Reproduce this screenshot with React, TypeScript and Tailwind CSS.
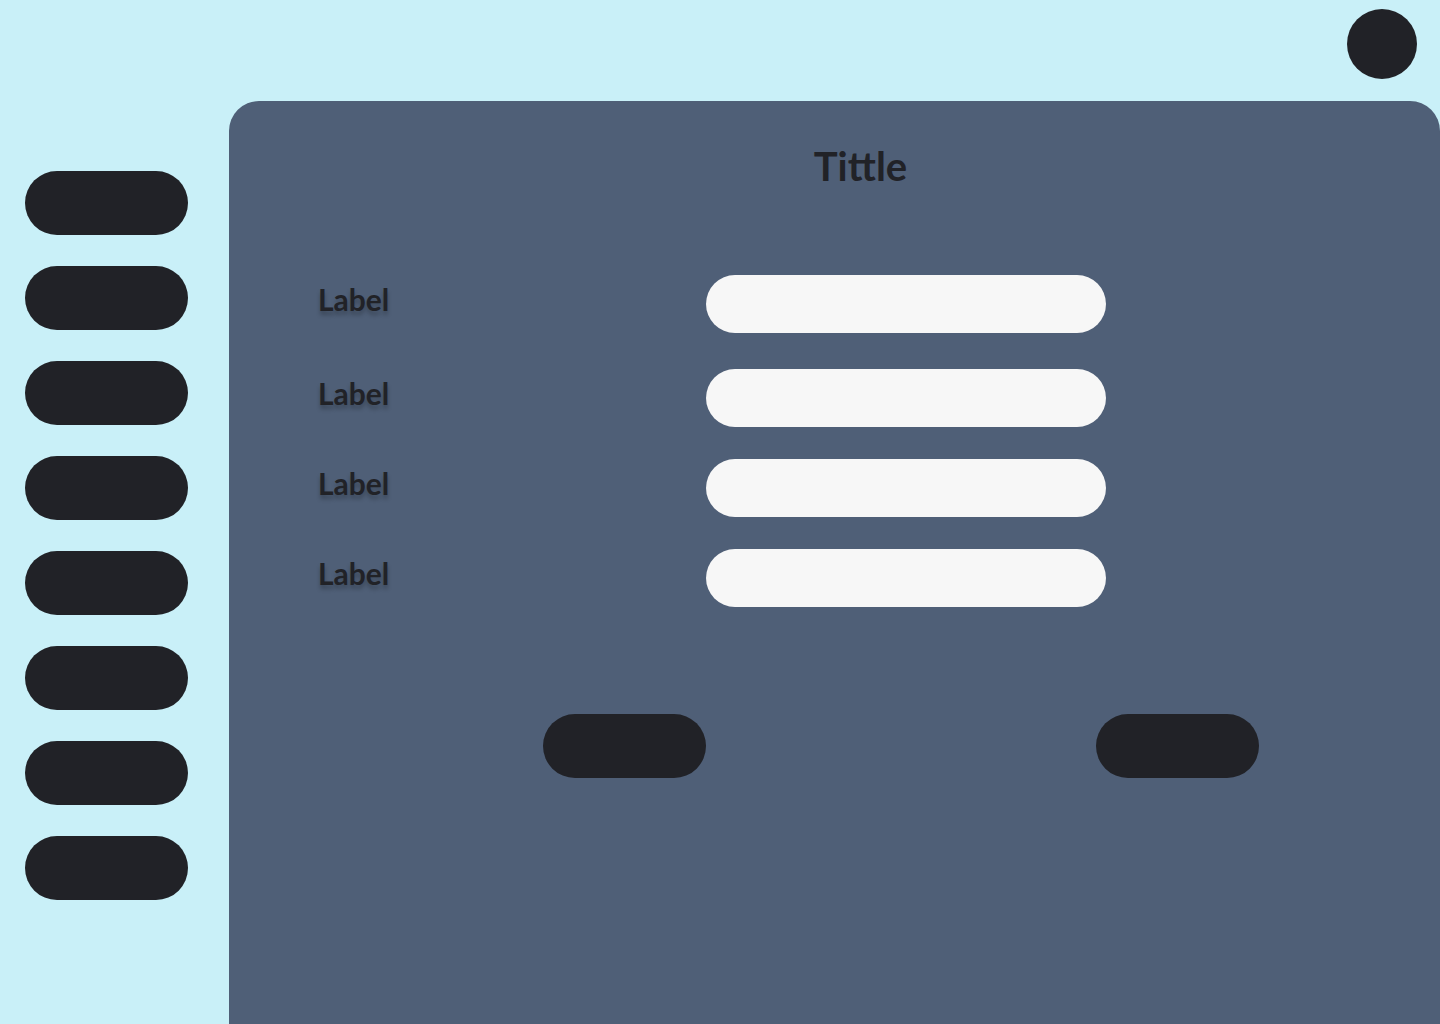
import React from "react";

const navItems = [1, 2, 3, 4, 5, 6, 7, 8];
const fields = [
    { label: "Label", mt: "mt-0" },
    { label: "Label", mt: "mt-[36px]" },
    { label: "Label", mt: "mt-[32px]" },
    { label: "Label", mt: "mt-[32px]" },
];

const App: React.FC = () => {
    return (
        <div className="min-h-[1024px] h-screen flex flex-col bg-[#c9f0f8] overflow-hidden font-['Lato',sans-serif]">
            <div className="h-[101px] shrink-0 flex justify-end items-start pt-[9px] pr-[23px]">
                <div className="w-[70px] h-[70px] rounded-full bg-[#212227]"></div>
            </div>

            <div className="flex flex-1">
                <div className="w-[229px] shrink-0 flex flex-col gap-[31px] pl-[25px] pt-[70px]">
                    {navItems.map((n) => (
                        <button key={n} className="w-[163px] h-[64px] rounded-full bg-[#212227]"></button>
                    ))}
                </div>

                <div className="flex-1 bg-[#4f5f77] rounded-tl-[30px] rounded-tr-[30px] flex flex-col">
                    <div className="flex justify-center pl-[52px] pt-[45px]">
                        <h1 className="text-[40px] leading-none font-bold text-[#212227]">Tittle</h1>
                    </div>

                    <div className="flex flex-col pl-[89px] pt-[89px]">
                        {fields.map((f, i) => (
                            <div key={i} className={`flex items-center ${f.mt}`}>
                                <span className="w-[388px] mb-[10px] text-[30px] leading-none font-bold text-[#212227] [text-shadow:0_4px_4px_rgba(0,0,0,0.25)]">
                                    {f.label}
                                </span>
                                <input className="w-[400px] h-[58px] rounded-full bg-[#f7f7f7] outline-none px-6" />
                            </div>
                        ))}
                    </div>

                    <div className="flex pl-[314px] pt-[107px] gap-[390px]">
                        <button className="w-[163px] h-[64px] rounded-full bg-[#212227]"></button>
                        <button className="w-[163px] h-[64px] rounded-full bg-[#212227]"></button>
                    </div>
                </div>
            </div>
        </div>
    );
};

export default App;
